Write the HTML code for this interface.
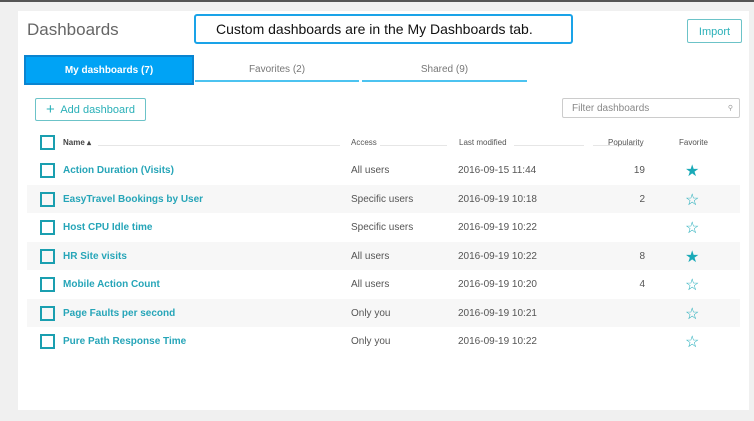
<!DOCTYPE html>
<html><head><style>
body{margin:0;width:754px;height:421px;background:#f0f0f0;font-family:"Liberation Sans",sans-serif;position:relative;overflow:hidden}
.top{position:absolute;left:0;top:0;width:754px;height:2px;background:#555}
.panel{position:absolute;left:18px;top:11px;width:731px;height:399px;background:#fff}
.a{position:absolute}
.title{left:27px;top:20px;font-size:17px;color:#666}
.callout{left:194px;top:14px;height:26px;border:2px solid #1aa3e8;border-radius:3px;background:#fff;font-size:14px;color:#111;line-height:26px;padding-left:20px;width:355px}
.tabact{left:24px;top:55px;width:166px;height:26px;border:2px solid #0a84d0;background:#00a3f5;color:#fff;font-size:10px;font-weight:bold;text-align:center;line-height:27px}
.tab{top:56px;height:24px;border-bottom:2px solid #4cc3f0;font-size:10px;color:#777;text-align:center;line-height:27px}
.btn{border:1px solid #6cc3c8;border-radius:2px;color:#2ab0b8;font-size:11px;text-align:center}
.filter{left:562px;top:98px;width:178px;height:20px;border:1px solid #ccc;border-radius:2px;font-size:10px;color:#888;line-height:20px;padding-left:9px;box-sizing:border-box}
.cb{width:11px;height:11px;border:2px solid #1a9fb0}
.h{font-size:8px;color:#555;top:138px}
.row{position:absolute;left:27px;width:713px;height:28px}
.row.g{background:#f7f7f7}
.row span{position:absolute;top:9px;font-size:10px;color:#555}
.row .n{left:36px;color:#26a5b8;font-weight:bold}
.row .c{left:13px;top:7px;width:11px;height:11px;border:2px solid #1a9fb0;position:absolute}
.row .p{right:95px}
.row .s{left:658px;top:5px;font-size:16px;color:#1aaab8}
.line{position:absolute;height:1px;background:#e6e6e6;top:145px}
</style></head><body>
<div class="top"></div>
<div class="panel"></div>
<div class="a title">Dashboards</div>
<div class="a callout">Custom dashboards are in the My Dashboards tab.</div>
<div class="a tabact">My dashboards (7)</div>
<div class="a tab" style="left:195px;width:164px">Favorites (2)</div>
<div class="a tab" style="left:362px;width:165px">Shared (9)</div>
<div class="a btn" style="left:687px;top:19px;width:53px;height:22px;line-height:24px">Import</div>
<div class="a btn" style="left:35px;top:98px;width:109px;height:21px;line-height:21px"><b style="font-size:15px;font-weight:normal;vertical-align:-1px">+</b>&nbsp; Add dashboard</div>
<div class="a filter">Filter dashboards<span style="position:absolute;right:6px;font-size:7px;color:#999">&#9906;</span></div>
<div class="a cb" style="left:40px;top:135px"></div>
<div class="a h" style="left:63px;font-weight:bold;color:#444">Name ▴</div>
<div class="line" style="left:98px;width:242px"></div>
<div class="a h" style="left:351px">Access</div>
<div class="line" style="left:380px;width:67px"></div>
<div class="a h" style="left:459px">Last modified</div>
<div class="line" style="left:514px;width:70px"></div>
<div class="line" style="left:593px;width:50px"></div>
<div class="a h" style="left:608px">Popularity</div>
<div class="a h" style="left:679px">Favorite</div>
<div class="row" style="top:156px"><i class="c"></i><span class="n">Action Duration (Visits)</span><span style="left:324px">All users</span><span style="left:431px">2016-09-15 11:44</span><span class="p">19</span><span class="s">★</span></div>
<div class="row g" style="top:185px"><i class="c"></i><span class="n">EasyTravel Bookings by User</span><span style="left:324px">Specific users</span><span style="left:431px">2016-09-19 10:18</span><span class="p">2</span><span class="s">☆</span></div>
<div class="row" style="top:213px"><i class="c"></i><span class="n">Host CPU Idle time</span><span style="left:324px">Specific users</span><span style="left:431px">2016-09-19 10:22</span><span class="s">☆</span></div>
<div class="row g" style="top:242px"><i class="c"></i><span class="n">HR Site visits</span><span style="left:324px">All users</span><span style="left:431px">2016-09-19 10:22</span><span class="p">8</span><span class="s">★</span></div>
<div class="row" style="top:270px"><i class="c"></i><span class="n">Mobile Action Count</span><span style="left:324px">All users</span><span style="left:431px">2016-09-19 10:20</span><span class="p">4</span><span class="s">☆</span></div>
<div class="row g" style="top:299px"><i class="c"></i><span class="n">Page Faults per second</span><span style="left:324px">Only you</span><span style="left:431px">2016-09-19 10:21</span><span class="s">☆</span></div>
<div class="row" style="top:327px"><i class="c"></i><span class="n">Pure Path Response Time</span><span style="left:324px">Only you</span><span style="left:431px">2016-09-19 10:22</span><span class="s">☆</span></div>
</body></html>
